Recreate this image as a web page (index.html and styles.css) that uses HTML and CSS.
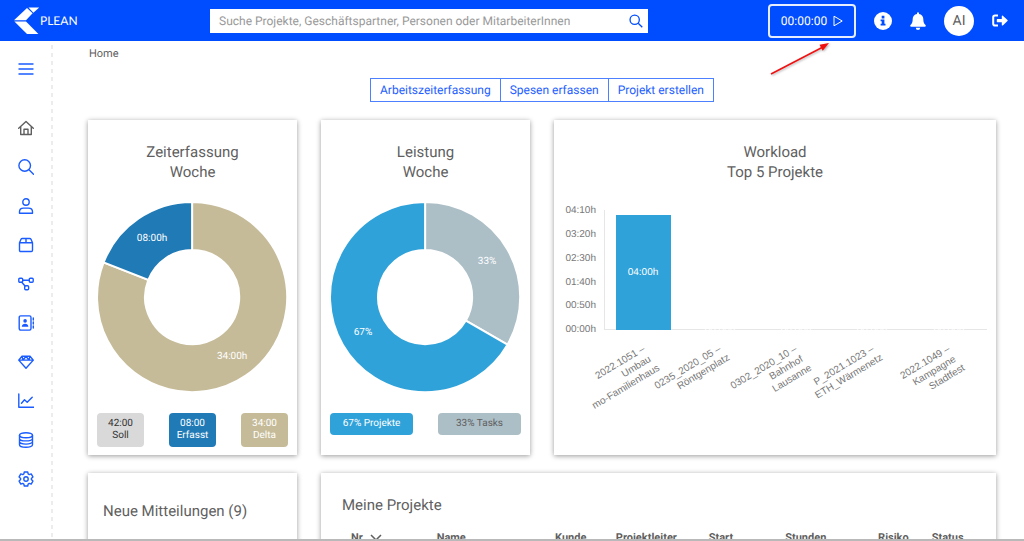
FILE: index.html
```html
<!DOCTYPE html>
<html lang="de">
<head>
<meta charset="utf-8">
<meta name="viewport" content="width=device-width, initial-scale=1">
<title>PLEAN – Home</title>
<link rel="stylesheet" href="styles.css">
</head>
<body>
<header class="topbar">
  <a class="brand" href="#">
    <svg class="brand-mark" width="26" height="28" viewBox="0 0 26 28" aria-hidden="true"><path d="M0 13.2 13 1l5.600 5.200-6.600 7z"/><path d="M14.500.5h10.700l-5.800 5.200z"/><path d="M.4 14.600H12L24.400 27H13z"/></svg>
    <span>PLEAN</span>
  </a>
  <form class="search" role="search">
    <input class="search-input" type="search" aria-label="Suche" placeholder="Suche Projekte, Geschäftspartner, Personen oder MitarbeiterInnen">
    <button class="search-button" type="button" aria-label="Suchen"><svg width="14" height="14" viewBox="0 0 16 16"><circle cx="6.5" cy="6.5" r="5.3"/><path d="m10.5 10.5 4.7 4.7"/></svg></button>
  </form>
  <div class="tools">
    <button class="timer" type="button"><span>00:00:00</span><svg width="10" height="12" viewBox="0 0 10 12" aria-hidden="true"><path d="M1 1.2v9.6L9.2 6z"/></svg></button>
    <button class="tool" type="button" aria-label="Information"><svg width="18" height="18" viewBox="0 0 18 18"><circle cx="9" cy="9" r="9"/><path class="cut" d="M7.7 3.8h2.7v2.6H7.7zM6.6 7.6h3.8v4.2h1.1v1.7H6.6v-1.7h1.1V9.3H6.6z"/></svg></button>
    <button class="tool" type="button" aria-label="Benachrichtigungen"><svg width="16" height="18" viewBox="0 0 16 18"><path d="M7 1.2a1 1 0 0 1 2 0v.7c2.700.4 4.300 2.400 4.300 5 0 3.600.9 4.700 2 5.800.9.900.4 2-.8 2H1.500c-1.200 0-1.700-1.100-.8-2 1.100-1.100 2-2.200 2-5.800 0-2.600 1.600-4.600 4.300-5zM5.800 15.700h4.400a2.200 2.200 0 0 1-4.400 0z"/></svg></button>
    <button class="avatar" type="button">AI</button>
    <button class="tool" type="button" aria-label="Abmelden"><svg width="16" height="14" viewBox="0 0 16 14"><path class="stroke" d="M6 1.600H3A1.800 1.800 0 0 0 1.200 3.400v6.400A1.800 1.800 0 0 0 3 11.600h3"/><path d="M5.400 4.900h4.400V2.300c0-.6.600-.9 1-.5l4.700 4.300c.3.300.3.700 0 1l-4.700 4.300c-.4.400-1 .1-1-.5V8.300H5.400a.6.6 0 0 1-.6-.6V5.500c0-.3.300-.6.600-.6z"/></svg></button>
    <svg class="pointer" width="66" height="36" viewBox="0 0 66 36" aria-hidden="true"><path class="pointer-line" d="M3 32 55 5"/><path class="pointer-head" d="M61 1 51.500 2.800l3.200 6z"/></svg>
  </div>
</header>
<div class="shell">
  <nav class="sidebar" aria-label="Hauptnavigation">
    <button class="menu" type="button" aria-label="Menü"><svg viewBox="0 0 16 16"><path d="M1 3h14M1 8h14M1 13h14"/></svg></button>
    <a class="current" href="#" aria-label="Home"><svg viewBox="0 0 16 16"><path d="M.7 8.200 8 1.500l7.300 6.700M2.700 6.700v7.800h10.600V6.700M6 14.300V9.200h4v5.100"/></svg></a>
    <a href="#" aria-label="Suche"><svg viewBox="0 0 16 16"><circle cx="6.700" cy="6.500" r="5.800"/><path d="m11 10.800 4.500 4.500"/></svg></a>
    <a href="#" aria-label="Personen"><svg viewBox="0 0 16 16"><circle cx="8" cy="4" r="3.200"/><path d="M1.500 15.200v-1.400c0-2.400 1.700-3.700 4-3.700h5c2.300 0 4 1.300 4 3.700v1.400z"/></svg></a>
    <a href="#" aria-label="Pakete"><svg viewBox="0 0 16 16"><path d="M1.500 5.700 3 2.300q.4-.8 1.300-.8h7.400q.9 0 1.300.8l1.500 3.400v7.600q0 1.200-1.200 1.200H2.700q-1.200 0-1.200-1.200zM1.500 5.700h13M8 1.500v4.200"/></svg></a>
    <a href="#" aria-label="Prozesse"><svg viewBox="0 0 16 16"><rect x=".8" y="2.300" width="3.900" height="3.900" rx="1"/><rect x="11.300" y="2.300" width="3.900" height="3.900" rx="1"/><rect x="6.700" y="9.800" width="3.900" height="3.900" rx="1"/><path d="M4.700 4.200h6.600M3.800 6.200 7 10"/></svg></a>
    <a href="#" aria-label="Kontakte"><svg viewBox="0 0 16 16"><rect x="1.200" y=".9" width="11.800" height="14.200" rx="1.500"/><path d="M15.300 3v2M15.300 7v2M15.300 11v2"/><path class="solid" d="M7.100 4.100a1.800 1.800 0 1 1 0 3.600 1.800 1.800 0 0 1 0-3.600zM3.800 11.800c0-4 6.600-4 6.600 0z"/></svg></a>
    <a href="#" aria-label="Werte"><svg viewBox="0 0 16 16"><path d="M4 2.200h8l3.300 3.900L8 14.300.7 6.100zM.7 6.100h14.600M4 2.200l1 3.900 3-3.900 3 3.900 1-3.900"/></svg></a>
    <a href="#" aria-label="Auswertungen"><svg viewBox="0 0 16 16"><path d="M.8 1v13.200h15M3.500 10.200l3-3.400 2.700 2.500 5-5"/></svg></a>
    <a href="#" aria-label="Daten"><svg viewBox="0 0 16 16"><ellipse cx="8" cy="3.200" rx="6.500" ry="2.500"/><path d="M1.500 3.200v9.600c0 3.300 13 3.300 13 0V3.200M1.500 6.400c0 3.300 13 3.300 13 0M1.500 9.600c0 3.300 13 3.300 13 0"/></svg></a>
    <a href="#" aria-label="Einstellungen"><svg viewBox="0 0 16 16"><path d="M6.300 1h3.400l.5 2 1 .6 2-.7 1.700 3-1.500 1.500v1.200l1.500 1.500-1.700 3-2-.7-1 .6-.5 2H6.300l-.5-2-1-.6-2 .7-1.700-3 1.500-1.500V7.400L1.100 5.900l1.700-3 2 .7 1-.6z"/><circle cx="8" cy="8" r="2.200"/></svg></a>
  </nav>
  <main class="content">
    <div class="crumb">Home</div>
    <div class="actions">
      <button type="button">Arbeitszeiterfassung</button><button type="button">Spesen erfassen</button><button type="button">Projekt erstellen</button>
    </div>
    <div class="cards">
      <section class="card">
        <h2>Zeiterfassung<br>Woche</h2>
        <svg class="donut" viewBox="-95 -95 190 190" role="img" aria-label="Zeiterfassung Woche">
          <path class="sand" d="M0-95A95 95 0 1 1-88.400-34.700L-43.700-17.200A47 47 0 1 0 0-47z"/>
          <path class="navy" d="M-88.400-34.700A95 95 0 0 1 0-95V-47A47 47 0 0 0-43.700-17.200z"/>
          <text x="-40" y="-56">08:00h</text><text x="40" y="62">34:00h</text>
        </svg>
        <div class="stats">
          <div class="stat grey">42:00<br>Soll</div><div class="stat navy">08:00<br>Erfasst</div><div class="stat sand">34:00<br>Delta</div>
        </div>
      </section>
      <section class="card">
        <h2>Leistung<br>Woche</h2>
        <svg class="donut" viewBox="-95 -95 190 190" role="img" aria-label="Leistung Woche">
          <path class="mist" d="M0-95A95 95 0 0 1 82.300 47.500L40.700 23.500A47 47 0 0 0 0-47z"/>
          <path class="sky" d="M82.300 47.500A95 95 0 1 1 0-95V-47A47 47 0 1 0 40.700 23.500z"/>
          <text x="62" y="-33">33%</text><text x="-62" y="38">67%</text>
        </svg>
        <div class="stats">
          <div class="share sky">67% Projekte</div><div class="share mist">33% Tasks</div>
        </div>
      </section>
      <section class="card">
        <h2>Workload<br>Top 5 Projekte</h2>
        <svg class="bars" viewBox="0 0 442 240" role="img" aria-label="Workload Top 5 Projekte">
          <path class="axis" d="M50.500 10v120M50 129.500h383"/>
          <g class="ticks"><text x="42" y="13">04:10h</text><text x="42" y="37">03:20h</text><text x="42" y="61">02:30h</text><text x="42" y="85">01:40h</text><text x="42" y="108">00:50h</text><text x="42" y="132">00:00h</text></g>
          <rect class="sky" x="62" y="15" width="55" height="115"/>
          <g class="values"><text x="89" y="75">04:00h</text><text x="166" y="133">00:00h</text><text x="242" y="133">00:00h</text><text x="318" y="133">00:00h</text><text x="395" y="133">00:00h</text></g>
          <g class="names">
            <g transform="translate(94 149) rotate(-31)"><text x="-3" y="0">2022.1051 –</text><text x="-3" y="12">Umbau</text><text x="0" y="24">mo-Familienhaus</text></g>
            <g transform="translate(170 149) rotate(-31)"><text x="-3" y="0">0235_2020_05 –</text><text x="0" y="12">Röntgenplatz</text></g>
            <g transform="translate(246 149) rotate(-31)"><text x="-3" y="0">0302_2020_10 –</text><text x="-3" y="12">Bahnhof</text><text x="0" y="24">Lausanne</text></g>
            <g transform="translate(323 149) rotate(-31)"><text x="-3" y="0">P_2021.1023 –</text><text x="0" y="12">ETH_Wärmenetz</text></g>
            <g transform="translate(399 149) rotate(-31)"><text x="-3" y="0">2022.1049 –</text><text x="-3" y="12">Kampagne</text><text x="0" y="24">Stadtfest</text></g>
          </g>
        </svg>
      </section>
      <section class="card news"><h2>Neue Mitteilungen (9)</h2></section>
      <section class="card projects">
        <h2>Meine Projekte</h2>
        <table>
          <colgroup><col class="c-nr"><col class="c-name"><col class="c-kunde"><col class="c-leiter"><col class="c-start"><col class="c-stunden"><col class="c-risiko"><col></colgroup>
          <thead><tr><th>Nr <svg class="sort" width="12" height="7" viewBox="0 0 12 7" aria-hidden="true"><path d="m1 1 5 5 5-5"/></svg></th><th>Name</th><th>Kunde</th><th>Projektleiter</th><th>Start</th><th>Stunden</th><th>Risiko</th><th>Status</th></tr></thead>
        </table>
      </section>
    </div>
  </main>
</div>
</body>
</html>
```

FILE: styles.css
```css
* { box-sizing: border-box; }
body {
  margin: 0;
  height: 100vh;
  display: flex;
  flex-direction: column;
  overflow: hidden;
  background: #fff;
  border-bottom: 2px solid #b9b9b9;
  color: #5f5f5f;
  font-family: Roboto, "Liberation Sans", sans-serif;
  font-size: 11px;
  text-rendering: geometricPrecision;
}
button, input { text-rendering: inherit; }
button { margin: 0; padding: 0; border: 0; background: none; font: inherit; color: inherit; }
svg { display: block; }
h2 { margin: 0; font-size: 15px; line-height: 20px; font-weight: 400; }

.topbar {
  flex: none;
  height: 41px;
  display: flex;
  align-items: center;
  background: #004dff;
  color: #fff;
  padding-left: 14px;
  padding-right: 16px;
}
.brand {
  flex: 0 0 196px;
  display: flex;
  align-items: center;
  color: #fff;
  font-family: Lato, sans-serif;
  font-size: 12px;
  text-decoration: none;
}
.brand-mark { fill: #fff; }
.search { flex: 0 1 438px; display: flex; height: 24px; background: #fff; }
.search-input {
  flex: 1;
  min-width: 0;
  border: 0;
  padding: 0 0 0 9px;
  outline: 0;
  background: none;
  font: 12px Roboto, sans-serif;
}
.search-input::placeholder { color: #999; }
.search-button { width: 25px; display: grid; place-items: center; }
.search-button svg { fill: none; stroke: #004dff; stroke-width: 1.5; }
.tools { position: relative; margin-left: auto; display: flex; align-items: center; gap: 18px; }
.timer {
  width: 88px;
  height: 34px;
  display: flex;
  align-items: center;
  justify-content: center;
  gap: 6px;
  border: 2px solid #e6edff;
  border-radius: 4px;
  font-size: 12px;
}
.timer svg { fill: none; stroke: #fff; }
.tool svg { fill: #fff; }
.tool .cut { fill: #004dff; }
.tool .stroke { fill: none; stroke: #fff; stroke-width: 2; }
.avatar { width: 30px; height: 30px; border-radius: 50%; background: #fff; color: #5f5f5f; font-size: 14px; }
.pointer { position: absolute; left: 0; top: 38px; filter: drop-shadow(1px 1px 1px rgb(0 0 0 / 30%)); }
.pointer-line { stroke: #f01010; stroke-width: 1.5; }
.pointer-head { fill: #f01010; }

.shell { flex: 1; min-height: 0; display: flex; overflow: hidden; }
.sidebar {
  flex: 0 0 53px;
  display: flex;
  flex-direction: column;
  align-items: center;
  gap: 23px;
  padding: 20px 1px 0 0;
  background: repeating-linear-gradient(#fff 0 4px, #ececec 4px 8px) right / 2px 100% no-repeat;
  color: #1a5cff;
}
.sidebar svg { width: 16px; height: 16px; fill: none; stroke: currentColor; stroke-width: 1.4; stroke-linejoin: round; stroke-linecap: round; }
.sidebar .solid { fill: currentColor; stroke: none; }
.sidebar a { color: inherit; }
.sidebar .menu { margin-bottom: 20px; }
.sidebar .current { color: #5f5f5f; }

.content { flex: 1; min-width: 0; padding: 6px 28px 0 35px; }
.crumb { line-height: 14px; padding-left: 1px; }
.actions { display: flex; justify-content: center; margin: 17px 0 18px; }
.actions button { height: 24px; padding: 0 9px; border: 1px solid #4d80ff; color: #2460ff; font-size: 12px; }
.actions button + button { border-left: 0; }

.cards { display: grid; grid-template-columns: 209fr 209fr 442fr; gap: 18px 24px; }
.card { min-width: 0; background: #fff; box-shadow: 0 1px 5px rgb(0 0 0 / 40%); padding: 22px 0 8px; text-align: center; }
.donut { width: 91%; margin: 20px auto 21px; }
.donut path { stroke: #fff; stroke-width: 2; }
.donut text { fill: #fff; font-size: 10px; text-anchor: middle; }
.sand { fill: #c6bb98; background: #c6bb98; }
.navy { fill: #207ab5; background: #207ab5; }
.sky { fill: #2fa2d9; background: #2fa2d9; }
.mist { fill: #acbec6; background: #acbec6; }
.grey { background: #d9d9d9; }
.stats { display: flex; justify-content: space-between; padding: 0 9px; font-size: 10px; line-height: 12px; color: #fff; }
.stat { width: 47px; padding: 5px 0; border-radius: 4px; }
.share { width: 83px; padding: 5px 0; border-radius: 4px; }
.stats .grey { color: #333; }
.stats .mist { color: #5f5f5f; }
.bars { width: 100%; margin-top: 18px; }
.axis { fill: none; stroke: #e6e6e6; }
.bars text { font-family: "Liberation Sans", sans-serif; font-size: 10px; }
.ticks, .names { fill: #777; text-anchor: end; }
.values { fill: #fff; text-anchor: middle; }

.news { text-align: left; padding: 28px 15px 60px; }
.projects { grid-column: span 2; text-align: left; padding-left: 21px; }
table { width: 100%; margin-top: 10px; border-collapse: collapse; table-layout: fixed; }
th { padding: 6px 0 6px 9px; text-align: left; font-size: 11px; line-height: 14px; font-weight: 700; }
.sort { display: inline-block; margin-left: 4px; fill: none; stroke: #5f5f5f; stroke-width: 1.5; }
.c-nr { width: 13.1%; }
.c-name { width: 18.1%; }
.c-kunde { width: 9.3%; }
.c-leiter { width: 14.2%; }
.c-start { width: 11.7%; }
.c-stunden { width: 14.2%; }
.c-risiko { width: 8.2%; }
```
